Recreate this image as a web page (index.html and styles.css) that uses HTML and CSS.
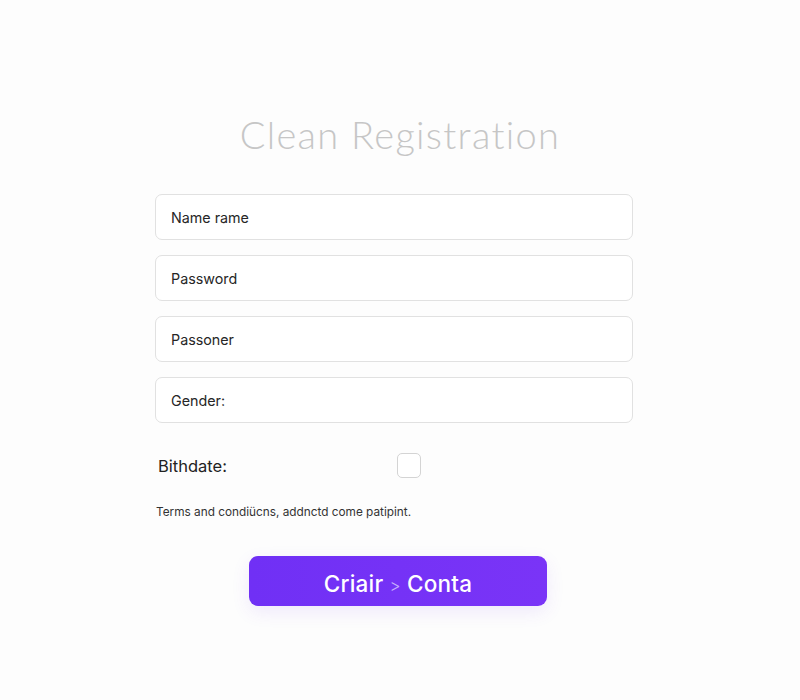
FILE: index.html
```html
<!DOCTYPE html>
<html>
<head>
<meta charset="utf-8">
<link rel="stylesheet" href="styles.css">
</head>
<body>
<main class="page">
  <h1 class="title">Clean Registration</h1>
  <form class="form">
    <div class="field">Name rame</div>
    <div class="field">Password</div>
    <div class="field">Passoner</div>
    <div class="field">Gender:</div>
    <div class="birth-row">
      <span class="birth-label">Bithdate:</span>
      <span class="check"></span>
    </div>
    <p class="terms">Terms and condiücns, addnctd come patipint.</p>
    <button type="button" class="btn">Criair <span class="sep">&gt;</span> Conta</button>
  </form>
</main>
</body>
</html>
```
FILE: styles.css
```css
html, body {
  margin: 0;
  padding: 0;
  background: #fdfdfd;
}
.page {
  width: 800px;
  height: 700px;
  padding-top: 112px;
  box-sizing: border-box;
  font-family: "Lato", "Inter", sans-serif;
}
.title {
  margin: 0;
  text-align: center;
  font-family: "Lato", sans-serif;
  font-weight: 300;
  font-size: 38px;
  letter-spacing: 1.3px;
  color: #c6c6c6;
  line-height: 44px;
}
.form {
  margin: 38px 0 0 155px;
  width: 478px;
  display: flex;
  flex-direction: column;
}
.field {
  height: 46px;
  box-sizing: border-box;
  border: 1px solid #e1e1e1;
  border-radius: 7px;
  background: #fff;
  padding: 0 15px;
  display: flex;
  align-items: center;
  font-family: "Inter", sans-serif;
  font-size: 14.3px;
  color: #262626;
  margin-bottom: 15px;
}
.birth-row {
  display: flex;
  align-items: center;
  margin-top: 15px;
  padding-left: 3px;
}
.birth-label {
  font-family: "Inter", sans-serif;
  font-size: 16.5px;
  color: #222;
  width: 239px;
}
.check {
  width: 22px;
  height: 23px;
  border: 1.5px solid #d4d4d4;
  border-radius: 5px;
  background: #fff;
}
.terms {
  margin: 27px 0 0 1px;
  font-family: "Inter", sans-serif;
  font-size: 11.8px;
  color: #333;
}
.btn {
  margin: 37px 0 0 94px;
  width: 298px;
  height: 50px;
  padding: 4px 0 0;
  border: none;
  border-radius: 9px;
  background: linear-gradient(90deg, #7030f5, #7a34f7);
  color: #fff;
  font-family: "Inter", sans-serif;
  font-weight: 500;
  font-size: 22.5px;
  letter-spacing: 0.2px;
  box-shadow: 0 6px 18px rgba(120, 60, 240, 0.1);
}
.sep {
  font-size: 17px;
  color: #c4aefc;
  font-weight: 300;
}
```
